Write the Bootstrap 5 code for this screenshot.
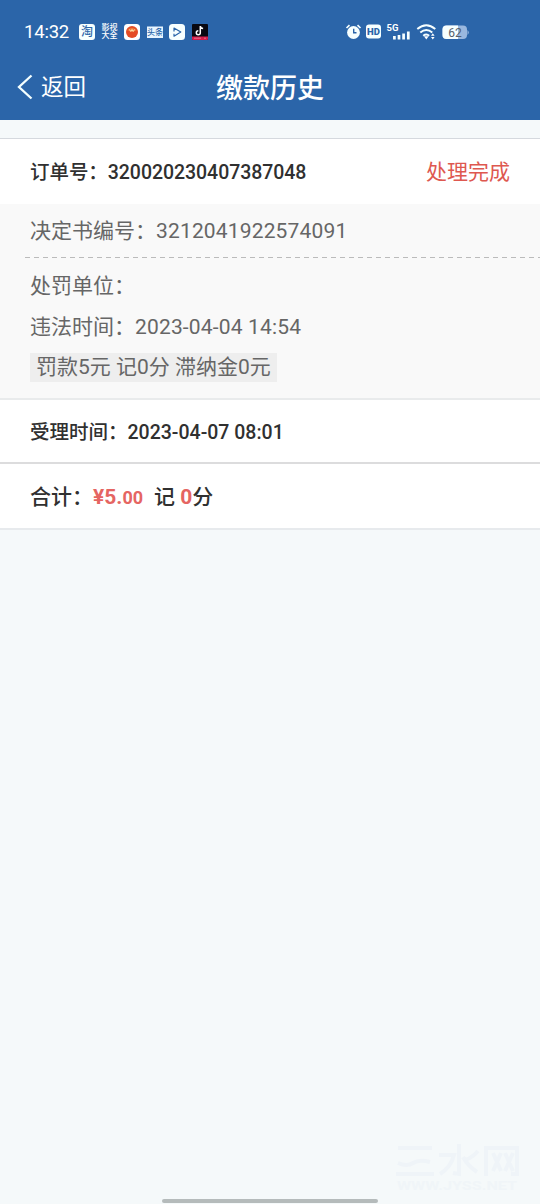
<!DOCTYPE html>
<html lang="zh-CN">
<head>
<meta charset="utf-8">
<meta name="viewport" content="width=device-width, initial-scale=1">
<title>缴款历史</title>
<link href="https://cdn.jsdelivr.net/npm/bootstrap@5.3.0/dist/css/bootstrap.min.css" rel="stylesheet">
<style>
body{background:#f5f9fa;font-family:Roboto,"Noto Sans CJK SC",sans-serif;font-size:21px;line-height:30px;color:#666;min-height:1204px}
.top-area{background:#2b65a9;color:#fff;height:120px}
.status{height:54px;padding:9px 71px 0 24px}
.clock{font-size:18.5px;letter-spacing:-.2px;width:55px;line-height:24px}
.app-icons{gap:6.5px}
.status svg{display:block;flex:none}
.tiny-name{font-size:8px;line-height:8px;width:16px;font-weight:500;white-space:nowrap}
.title-bar{height:66px;padding:0 17px;display:grid;grid-template-columns:1fr auto 1fr}
.back{color:#fff;font-size:22.5px}
.back-label{margin-left:-1px}
.page-title{font-size:27px;font-weight:500;margin:0;line-height:40px;padding-top:3px}
.order{margin-top:18px;border-top:1px solid #d5d9de;background:#fff}
.strong-line{color:#303030;font-size:19.5px;font-weight:500}
.order-head{height:65px;padding:0 30px}
.order-no{padding-top:3px;letter-spacing:-.05px}
.state{color:#de5850}
.detail{background:#f9f9f9;height:194px}
.doc-no{height:53px;padding-left:30px}
.num{letter-spacing:.16px}
.dash{height:1px;margin-left:25px;background:repeating-linear-gradient(90deg,#bbb 0 5px,transparent 5px 9px)}
.info{padding:13px 30px 0}
.info-row{height:40.5px}
.fee{background:#eee;display:inline-block;padding:0 6px;height:29px;line-height:29px;margin-top:-1px}
.accept{border-top:2px solid #e9ebec;height:64px;padding:3px 30px 0}
.sum{border-top:2px solid #dcdcdd;border-bottom:2px solid #e7eaed;height:68px;padding:2px 30px 0;font-size:21px}
.money{color:#e56562;font-weight:700}
.money small{font-size:18px}
.points{margin-left:11px}
.home-bar{width:216px;height:4px;border-radius:2px;background:#b5bbbb;bottom:1px}
.stamp{right:18px;bottom:11px}
</style>
</head>
<body class="position-relative">
<header class="top-area">
  <div class="status d-flex align-items-center">
    <span class="clock">14:32</span>
    <div class="app-icons d-flex align-items-center">
      <svg width="16" height="16" viewBox="0 0 16 16"><rect width="16" height="16" rx="3" fill="#f7ffff"/><text x="8" y="12.2" text-anchor="middle" font-size="12" font-weight="500" fill="#2b65a9">淘</text></svg>
      <span class="tiny-name">影视<br>大全</span>
      <svg width="16" height="16" viewBox="0 0 16 16"><rect width="16" height="16" rx="3.5" fill="#fff"/><circle cx="8" cy="8" r="6" fill="#e44b25"/><path d="M3.3 6.3Q8 1 12.7 6.300Q8 9 3.3 6.300" fill="#f07a38"/><path d="M5.500 5.500l1.300 2L8 5.500l1.200 2 1.300-2" fill="none" stroke="#ffe2ae"/></svg>
      <svg width="16" height="16" viewBox="0 0 16 16"><rect y="2.5" width="16" height="11.5" fill="#e9f5ff"/><text x="8" y="11.2" text-anchor="middle" font-size="8" font-weight="500" fill="#2b65a9">头条</text></svg>
      <svg width="16" height="16" viewBox="0 0 16 16"><rect width="16" height="16" rx="3.5" fill="#f7ffff"/><path d="M5 7.500V4l6.800 4L5 12.200V9.700" fill="none" stroke="#2b65a9" stroke-width="1.200" stroke-linejoin="round"/></svg>
      <svg width="16" height="16" viewBox="0 0 16 16"><rect width="16" height="16" rx="1" fill="#080811"/><path d="M8.3 2v6.7a2 2 0 1 1-2-2M8.3 2.2q.4 2.2 2.8 2.4" fill="none" stroke="#fff" stroke-width="1.5"/><path d="M0 12.500h16V15a1 1 0 0 1-1 1H1a1 1 0 0 1-1-1z" fill="#d61c4b"/><path d="M2 14.200h7m3 0h2" stroke="#e7728d"/></svg>
    </div>
    <div class="ms-auto d-flex align-items-center">
      <svg width="124" height="20" viewBox="0 0 124 20">
        <g fill="#f7ffff"><circle cx="8.5" cy="10.500" r="6.400"/><path d="M1.500 6l3-2.800M15.500 6l-3-2.800" stroke="#f7ffff" stroke-width="1.700"/></g>
        <path d="M8.700 6.700v4h2.800" fill="none" stroke="#2b65a9" stroke-width="1.400"/>
        <rect x="21" y="2.500" width="15" height="14" rx="3" fill="#f7ffff"/><text x="28.500" y="12.900" text-anchor="middle" font-size="9.500" font-weight="900" fill="#2b65a9">HD</text>
        <text x="41.500" y="9.300" font-size="9.500" font-weight="700" fill="#fff">5G</text>
        <path d="M49.400 17.500V14M54 17.500V13M58.600 17.500V11.500M63.300 17.500v-8" stroke="#f7ffff" stroke-width="2.700"/>
        <g fill="none" stroke="#f7ffff" stroke-width="1.900"><path d="M72.300 7.100q9-7.600 18 0M75.300 10.500q6-5.200 12 0M78.200 13.700q3.200-2.500 6 0"/></g><path d="M79 14.300h4.600l-2.300 3.200z" fill="#fff"/><path d="M86 13.700l1.800-2.500 1.800 2.500zM86 15l1.800 2.500L89.600 15z" fill="#fff"/>
        <rect x="97.500" y="3.500" width="24.500" height="13.500" rx="4" fill="#9ab8df"/><path d="M101.500 3.500H113V17h-11.500a4 4 0 0 1-4-4V7.500a4 4 0 0 1 4-4z" fill="#f7ffff"/><path d="M122.500 8q2.500 2.500 0 5z" fill="#9ab8df"/><text x="110" y="14.700" text-anchor="middle" font-size="12" fill="#56606c">62</text>
      </svg>
    </div>
  </div>
  <nav class="title-bar align-items-center">
    <a href="#" class="back d-flex align-items-center text-decoration-none"><svg class="me-2" width="17" height="26" viewBox="0 0 17 26"><path d="M14.500 1.500L2 13l12.500 11.500" fill="none" stroke="#f4ffff" stroke-width="2.300"/></svg><span class="back-label">返回</span></a>
    <h1 class="page-title">缴款历史</h1>
  </nav>
</header>
<main class="order">
  <div class="order-head d-flex align-items-center justify-content-between"><span class="strong-line order-no">订单号：320020230407387048</span><span class="state">处理完成</span></div>
  <section class="detail">
    <div class="doc-no d-flex align-items-center">决定书编号：<span class="num">3212041922574091</span></div>
    <div class="dash"></div>
    <div class="info">
      <div class="info-row">处罚单位：</div>
      <div class="info-row">违法时间：<span class="num">2023-04-04 14:54</span></div>
      <span class="fee">罚款5元 记0分 滞纳金0元</span>
    </div>
  </section>
  <div class="accept strong-line d-flex align-items-center">受理时间：<span>2023-04-07 08:01</span></div>
  <div class="sum strong-line d-flex align-items-center"><span>合计：<span class="money">¥5.<small>00</small></span></span><span class="points">记 <span class="money">0</span>分</span></div>
</main>
<svg class="stamp position-absolute" width="126" height="52" viewBox="0 0 126 52"><g fill="none" stroke="#eff4f8"><path d="M2 7h34M2 22q9 4 15 0t17-1M0 33h38M43 14h15q-3 12-14 19M63 3v30l-6-1M82 10q-6 7-13 9M67 16q5 9 14 15M90 35V7h31v26h-6M97 12l8 18M105 12l-8 18M109 12l8 18M117 12l-8 18" stroke-width="4"/></g><text x="1" y="49" textLength="120" lengthAdjust="spacingAndGlyphs" font-size="13" font-weight="700" fill="#f0f5f8">WWW.JYSS.NET</text></svg>
<div class="home-bar position-absolute start-50 translate-middle-x"></div>
<script src="https://cdn.jsdelivr.net/npm/bootstrap@5.3.0/dist/js/bootstrap.bundle.min.js"></script>
</body>
</html>
